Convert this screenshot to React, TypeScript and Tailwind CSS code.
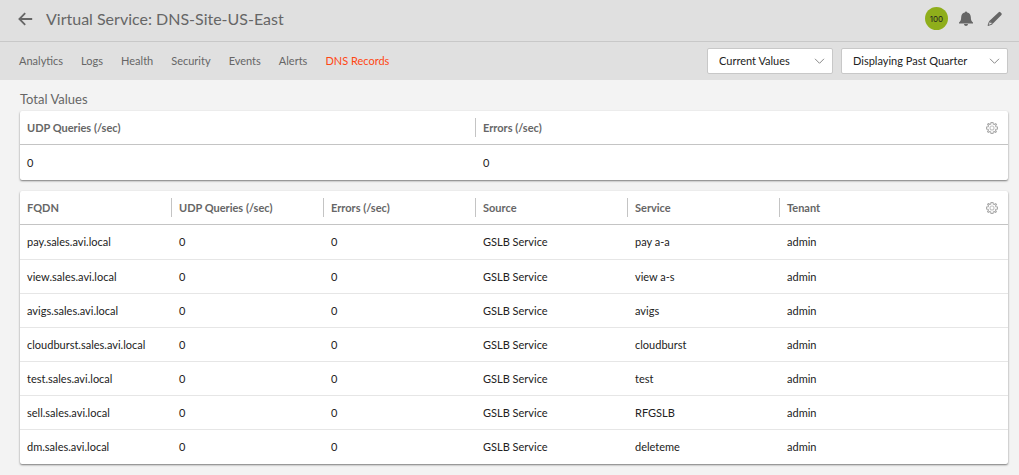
import type { ReactNode } from 'react';

const tabs = ['Analytics', 'Logs', 'Health', 'Security', 'Events', 'Alerts', 'DNS Records'];

const records = [
  ['pay.sales.avi.local', '0', '0', 'GSLB Service', 'pay a-a', 'admin'],
  ['view.sales.avi.local', '0', '0', 'GSLB Service', 'view a-s', 'admin'],
  ['avigs.sales.avi.local', '0', '0', 'GSLB Service', 'avigs', 'admin'],
  ['cloudburst.sales.avi.local', '0', '0', 'GSLB Service', 'cloudburst', 'admin'],
  ['test.sales.avi.local', '0', '0', 'GSLB Service', 'test', 'admin'],
  ['sell.sales.avi.local', '0', '0', 'GSLB Service', 'RFGSLB', 'admin'],
  ['dm.sales.avi.local', '0', '0', 'GSLB Service', 'deleteme', 'admin'],
];

function BackIcon() {
  return (
    <svg width="16" height="14" viewBox="0 0 16 14" fill="none" stroke="#666" strokeWidth="1.8" aria-hidden="true">
      <path d="M7.2 1.200 1.400 7l5.800 5.800M1.600 7h12.600" />
    </svg>
  );
}

function BellIcon() {
  return (
    <svg width="14" height="16" viewBox="0 0 14 16" fill="#666" aria-hidden="true">
      <path d="M7 .4c.7 0 1.100.4 1.200 1.100 2.300.5 3.500 2.200 3.600 4.500.1 3 .6 4.300 2.200 5.600v1H0v-1C1.600 10.300 2.100 9 2.200 6c.1-2.300 1.300-4 3.600-4.500C5.900.8 6.300.4 7 .4zM5 13h4c-.1 1.200-.9 2-2 2s-1.900-.8-2-2z" />
    </svg>
  );
}

function PencilIcon() {
  return (
    <svg width="16" height="16" viewBox="0 0 16 16" aria-hidden="true">
      <path fill="#666" d="M11.700 1.200a1.200 1.200 0 0 1 1.700 0l1 1a1.200 1.200 0 0 1 0 1.700L6 12.500 2.300 10z" />
      <path fill="#e0e0e0" stroke="#666" strokeWidth="1" strokeLinejoin="round" d="M2.500 10.300 1 14.500l4.400-1.500-.7-1.300-1.300-.3z" />
    </svg>
  );
}

function GearIcon() {
  return (
    <svg width="12" height="12" viewBox="0 0 24 24" fill="none" stroke="#aaa" strokeWidth="2.2" strokeLinejoin="round" aria-hidden="true">
      <path d="M10 1h4l.6 3.200 1.900.8L19.200 3.200 21 5l-1.900 2.600.8 1.900L23 10v4l-3.200.6-.8 1.900 1.800 2.700-1.700 1.700-2.600-1.900-1.900.8L14 23h-4l-.6-3.200-1.900-.8-2.700 1.800L3 19l1.900-2.600-.8-1.900L1 14v-4l3.200-.6.8-1.900L3.200 4.800 5 3l2.600 1.900 1.900-.8z" />
      <circle cx="12" cy="12" r="4" stroke="#c4c4c4" />
    </svg>
  );
}

function Dropdown({ label, value, className }: { label: string; value: string; className: string }) {
  return (
    <div className={`relative ${className}`}>
      <select
        aria-label={label}
        className="h-[26px] w-full appearance-none rounded-[2px] border border-[#c8c8c8] bg-white pr-7 pl-[11px] text-[11px] text-[#222]"
      >
        <option>{value}</option>
      </select>
      <svg
        className="pointer-events-none absolute top-2.5 right-2"
        width="11"
        height="7"
        viewBox="0 0 11 7"
        fill="none"
        stroke="#888"
        aria-hidden="true"
      >
        <path d="M1 .8 5.500 5.300 10 .8" />
      </svg>
    </div>
  );
}

function DataTable({ columns, rows, label }: { columns: string[]; rows: ReactNode[][]; label: string }) {
  return (
    <section className="rounded-[2px] bg-white shadow-[0_1px_2px_rgba(0,0,0,0.5)]">
      <table aria-label={label} className="w-full table-fixed border-separate border-spacing-0 text-left">
        <thead>
          <tr className="h-[34px]">
            {columns.map((column, i) => (
              <th key={column} scope="col" className="border-b border-[#c4c4c4] p-0 font-bold text-[#666]">
                <div
                  className={`flex h-[19px] items-center pl-[7px] ${i < columns.length - 1 ? 'border-r border-[#c4c4c4]' : ''}`}
                >
                  {column}
                </div>
              </th>
            ))}
            <th className="w-[76px] border-b border-[#c4c4c4] p-0 pr-2.5">
              <button type="button" aria-label="Table settings" className="ml-auto block">
                <GearIcon />
              </button>
            </th>
          </tr>
        </thead>
        <tbody>
          {rows.map((row, r) => (
            <tr key={r} className="group h-[34px] first:h-[35px]">
              {row.map((cell, c) => (
                <td key={c} className="truncate border-b border-[#e6e6e6] py-0 pr-0 pl-[7px] group-last:border-b-0">
                  {cell}
                </td>
              ))}
              <td className="border-b border-[#e6e6e6] group-last:border-b-0" />
            </tr>
          ))}
        </tbody>
      </table>
    </section>
  );
}

export default function App() {
  return (
    <div className="min-h-screen bg-[#f3f3f3] font-[Lato,sans-serif] text-[11px] leading-4 text-[#222]">
      <header className="flex h-[42px] items-center border-b border-[#c8c8c8] bg-[#e0e0e0] pr-4 pb-1 pl-[18px]">
        <button type="button" aria-label="Back">
          <BackIcon />
        </button>
        <h1 className="ml-3 text-base leading-5 text-[#666]">Virtual Service: DNS-Site-US-East</h1>
        <div className="ml-auto flex items-center">
          <span className="flex size-[23px] items-center justify-center rounded-full bg-[#8fae1b] font-[Inter,sans-serif] text-[8px] text-[#222]">
            100
          </span>
          <button type="button" aria-label="Alerts" className="ml-[11px]">
            <BellIcon />
          </button>
          <button type="button" aria-label="Edit" className="ml-[14px]">
            <PencilIcon />
          </button>
        </div>
      </header>

      <div className="flex h-[38px] items-center justify-between bg-[#e0e0e0] pr-[11px] pl-[19px]">
        <nav className="flex gap-[18px] text-[11px] whitespace-nowrap">
          {tabs.map((tab) => (
            <a key={tab} href="#" className={tab === 'DNS Records' ? 'text-[#ff4713]' : 'text-[#666]'}>
              {tab}
            </a>
          ))}
        </nav>
        <div className="flex gap-2">
          <Dropdown label="Value type" value="Current Values" className="w-[126px]" />
          <Dropdown label="Time range" value="Displaying Past Quarter" className="w-[167px]" />
        </div>
      </div>

      <main className="flex flex-col pt-2.5 pr-[11px] pb-2.5 pl-5">
        <h2 className="mb-[3px] text-[13px] leading-[18px] text-[#666]">Total Values</h2>
        <div className="flex flex-col gap-[11px]">
          <DataTable label="Total values" columns={['UDP Queries (/sec)', 'Errors (/sec)']} rows={[['0', '0']]} />
          <DataTable
            label="DNS records"
            columns={['FQDN', 'UDP Queries (/sec)', 'Errors (/sec)', 'Source', 'Service', 'Tenant']}
            rows={records}
          />
        </div>
      </main>
    </div>
  );
}
